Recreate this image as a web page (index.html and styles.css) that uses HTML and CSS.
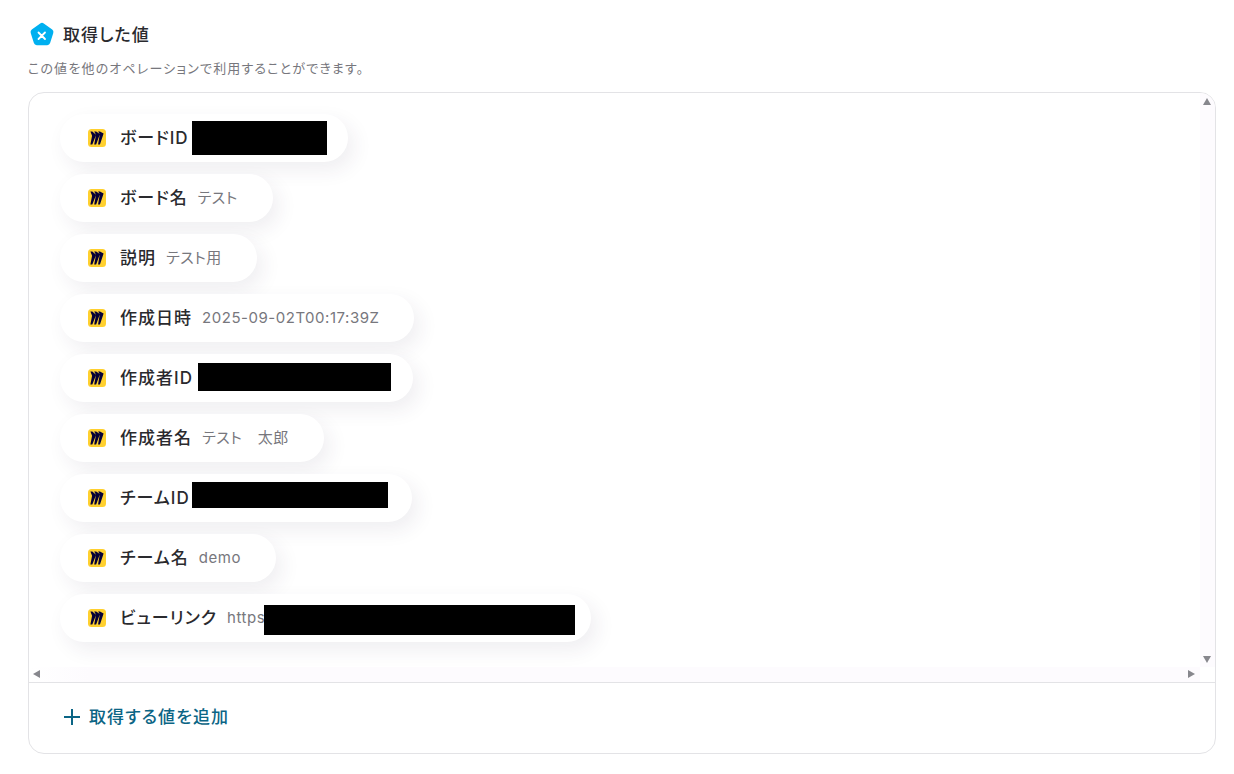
FILE: index.html
```html
<!DOCTYPE html>
<html lang="ja">
<head>
<meta charset="utf-8">
<title>取得した値</title>
<link rel="stylesheet" href="styles.css">
</head>
<body>
<main class="section">
  <header class="heading">
    <svg class="heading-icon" width="24" height="26" viewBox="0 0 24 26"><path d="M10.2 1.4a3 3 0 0 1 3.6 0l8.4 6.2a3 3 0 0 1 1.1 3.3l-3.2 10.2a3 3 0 0 1-2.9 2.1H6.8a3 3 0 0 1-2.9-2.1L.7 10.9a3 3 0 0 1 1.1-3.3z" fill="#00b0f0"/><path d="M8.5 10.5l6.5 6.5M15 10.5l-6.5 6.5" stroke="#fff" stroke-width="1.8" stroke-linecap="round"/></svg>
    <h1 class="title">取得した値</h1>
  </header>
  <p class="desc">この値を他のオペレーションで利用することができます。</p>
  <div class="card">
    <div class="scroller">
      <div class="list">
        <div class="pill"><svg class="miro" viewBox="0 0 18 18"><use href="#miro"/></svg><span class="label">ボードID</span><span class="redact r1"></span></div>
        <div class="pill"><svg class="miro" viewBox="0 0 18 18"><use href="#miro"/></svg><span class="label">ボード名</span><span class="value">テスト</span></div>
        <div class="pill"><svg class="miro" viewBox="0 0 18 18"><use href="#miro"/></svg><span class="label">説明</span><span class="value">テスト用</span></div>
        <div class="pill"><svg class="miro" viewBox="0 0 18 18"><use href="#miro"/></svg><span class="label">作成日時</span><span class="value">2025-09-02T00:17:39Z</span></div>
        <div class="pill"><svg class="miro" viewBox="0 0 18 18"><use href="#miro"/></svg><span class="label">作成者ID</span><span class="redact r2"></span></div>
        <div class="pill"><svg class="miro" viewBox="0 0 18 18"><use href="#miro"/></svg><span class="label">作成者名</span><span class="value">テスト　太郎</span></div>
        <div class="pill"><svg class="miro" viewBox="0 0 18 18"><use href="#miro"/></svg><span class="label">チームID</span><span class="redact r3"></span></div>
        <div class="pill"><svg class="miro" viewBox="0 0 18 18"><use href="#miro"/></svg><span class="label">チーム名</span><span class="value">demo</span></div>
        <div class="pill"><svg class="miro" viewBox="0 0 18 18"><use href="#miro"/></svg><span class="label">ビューリンク</span><span class="value">https</span><span class="redact r4"></span></div>
      </div>
      <div class="vbar"><i class="arrow up"></i><i class="arrow down"></i></div>
      <div class="hbar"><i class="arrow left"></i><i class="arrow right"></i></div>
    </div>
    <div class="footer">
      <svg class="plus" width="16" height="16" viewBox="0 0 16 16"><path d="M8 0v16M0 8h16" stroke="#0b6585" stroke-width="2"/></svg>
      <span class="add">取得する値を追加</span>
    </div>
  </div>
</main>
<svg class="defs" width="0" height="0"><defs><g id="miro"><rect width="18" height="18" rx="3.5" fill="#ffd02f"/><path transform="translate(2.4 2.4) scale(.55)" d="M17.392 0H13.9L17 4.808 10.444 0H6.949l3.102 6.3L3.494 0H0l3.05 8.131L0 24h3.494L10.05 6.985 6.949 24h3.494L17 5.494 13.899 24h3.493L24 3.672 17.392 0z" fill="#050038"/></g></defs></svg>
</body>
</html>
```
FILE: styles.css
```css
* { box-sizing: border-box; }
html, body { margin: 0; padding: 0; background: #fff; }
body {
  width: 1234px;
  height: 774px;
  overflow: hidden;
  font-family: Inter, "Noto Sans CJK JP", "Noto Sans", sans-serif;
  font-feature-settings: "palt";
  color: #2a2a2e;
}
.section { padding: 21px 18px 0 28px; }
.heading { display: flex; align-items: center; gap: 9px; padding-left: 2px; height: 26px; }
.heading-icon { flex: none; margin-top: 2px; }
.title { margin: 2px 0 0; font-size: 17px; font-weight: 500; letter-spacing: 0.06em; line-height: 26px; color: #2a2a2e; }
.desc { margin: 11px 0 0; font-size: 13px; line-height: 20px; color: #77777d; letter-spacing: 0.09em; height: 34px; }
.card { height: 662px; border: 1px solid #e3e3e6; border-radius: 16px; overflow: hidden; background: #fff; }
.scroller { position: relative; height: 590px; border-bottom: 1px solid #e3e3e6; overflow: hidden; }
.list { display: flex; flex-direction: column; align-items: flex-start; gap: 12px; padding: 21px 0 0 31px; }
.pill {
  display: flex; align-items: center; height: 48px; padding: 0 35px 0 28px;
  border-radius: 24px; background: #fff;
  box-shadow: 6px 8px 20px rgba(50, 40, 80, 0.08);
}
.miro { width: 18px; height: 18px; flex: none; margin-right: 14px; }
.label { font-size: 17px; font-weight: 500; letter-spacing: 0.06em; line-height: 24px; white-space: nowrap; color: #2a2a2e; }
.value { margin-left: 10px; font-size: 15px; line-height: 24px; color: #77777d; letter-spacing: 0.035em; white-space: nowrap; }
.redact { display: block; background: #000; flex: none; }
.r1 { width: 135px; height: 34px; margin: 0 -14px 0 3px; }
.r2 { width: 193px; height: 28px; margin: -2px -13px 0 5px; }
.r3 { width: 196px; height: 26px; margin: -6px -11px 0 2px; }
.r4 { width: 311px; height: 30px; margin: 4px -19px 0 -1px; }
.vbar { position: absolute; top: 0; right: 0; width: 15px; height: 574px; background: #fdfbfe; }
.hbar { position: absolute; left: 0; bottom: 0; right: 15px; height: 15px; background: linear-gradient(90deg, #fff 0, #fdfbfe 60px); }
.arrow { position: absolute; width: 0; height: 0; border-style: solid; border-color: transparent; }
.up { top: 5px; left: 3px; border-width: 0 4.5px 7px; border-bottom-color: #87878d; }
.down { bottom: 4px; left: 3px; border-width: 7px 4.5px 0; border-top-color: #87878d; }
.left { left: 4px; top: 3px; border-width: 4.5px 7px 4.5px 0; border-right-color: #87878d; }
.right { right: 5px; top: 3px; border-width: 4.5px 0 4.5px 7px; border-left-color: #87878d; }
.footer { display: flex; align-items: center; gap: 9px; height: 70px; padding: 0 0 2px 35px; }
.add { font-size: 17px; font-weight: 500; letter-spacing: 0.065em; color: #0b6585; line-height: 24px; }
.defs { position: absolute; }
```
